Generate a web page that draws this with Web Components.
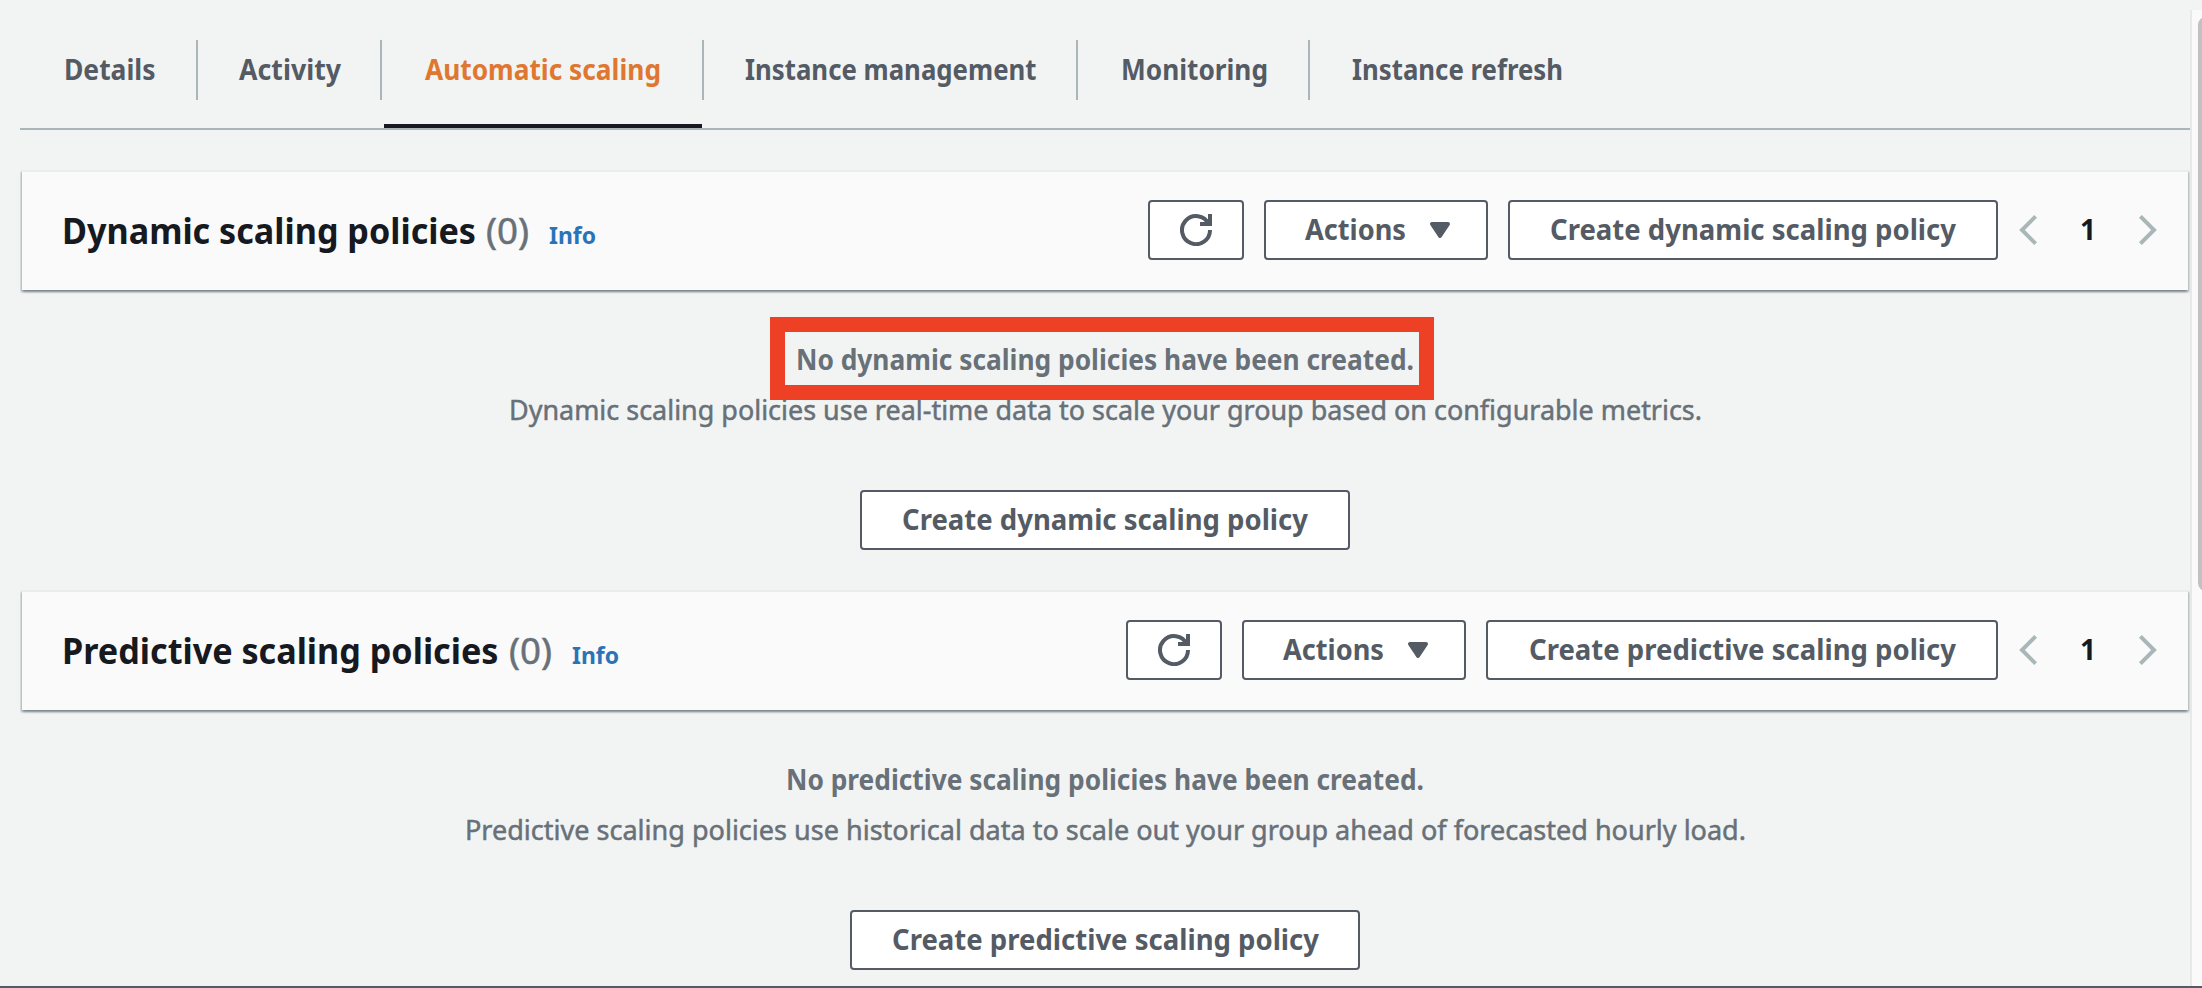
<!DOCTYPE html>
<html lang="en">
<head>
<meta charset="utf-8">
<title>Automatic scaling</title>
<style>
html, body { margin: 0; height: 100%; }
body { background: #f2f4f4; font-family: "Noto Sans", "Open Sans", sans-serif; font-size: 28px; color: #545b64; overflow: hidden; }
</style>
</head>
<body>
<scaling-page></scaling-page>
<script>
const define = (name, html, setup) => customElements.define(name, class extends HTMLElement {
  connectedCallback() {
    if (this.shadowRoot) return;
    const root = this.attachShadow({ mode: 'open' });
    root.innerHTML = typeof html === 'function' ? html(this) : html;
    if (setup) setup(this, root);
  }
});

/* One line of text, condensed or widened to a given advance width. */
define('fit-text', el => `<style>
  :host { display: block; flex: none; width: ${el.getAttribute('w')}px; white-space: nowrap; }
  span { display: inline-block; transform-origin: 0 50%; }
</style><span><slot></slot></span>`, (el, root) => {
  const span = root.querySelector('span');
  span.style.transform = `translateY(-1px) scaleX(${el.getAttribute('w') / span.getBoundingClientRect().width})`;
});

define('ui-icon', el => `<style>
  :host { display: block; flex: none; width: 32px; height: 32px; }
  svg { display: block; fill: none; stroke: currentColor; stroke-width: 2; }
</style><svg width="32" height="32" viewBox="0 0 16 16">${{
  refresh: '<path d="M10 5h5V0"/><path d="M15 8a7 7 0 1 1-.7-3"/>',
  caret: '<path d="M4 5h8l-4 6z" fill="currentColor" stroke-linejoin="round"/>',
  left: '<path d="M11.8 1.2 5 8l6.8 6.8"/>',
  right: '<path d="M4.2 1.2 11 8l-6.8 6.8"/>'
}[el.getAttribute('name')]}</svg>`);

define('ui-button', el => `<style>
  :host { display: flex; flex: none; box-sizing: border-box; width: ${el.getAttribute('w')}px; height: 60px;
    align-items: center; justify-content: center; gap: 18px; border: 2px solid #545b64; border-radius: 4px;
    background: #fff; color: #545b64; font-weight: 700; line-height: 56px; }
  :host([menu]) { padding-left: 9px; }
</style><slot></slot>`);

define('ui-tab', el => `<style>
  :host { display: block; box-sizing: border-box; height: 90px; }
  .label { box-sizing: border-box; height: 60px; line-height: 60px; padding-left: ${el.getAttribute('pad')}px;
    border-right: 2px solid #aab7b8; font-weight: 700; }
  :host([last]) .label { border: 0; }
  :host([active]) .label { color: #e07730; }
  :host([active]) .bar { height: 4px; margin: 24px 2px 0; background: #16191f; }
</style><div class="label"><slot></slot></div><div class="bar"></div>`);

define('ui-tabs', `<style>
  :host { display: grid; grid-template-columns: 178px 184px 322px 374px 232px 1fr; box-sizing: border-box;
    height: 130px; margin-left: 20px; padding-top: 40px; border-bottom: 2px solid #aab7b8; }
</style>
<ui-tab pad="44"><fit-text w="91.5">Details</fit-text></ui-tab>
<ui-tab pad="40.5"><fit-text w="102">Activity</fit-text></ui-tab>
<ui-tab pad="42.5" active><fit-text w="236">Automatic scaling</fit-text></ui-tab>
<ui-tab pad="41"><fit-text w="291.5">Instance management</fit-text></ui-tab>
<ui-tab pad="42.5"><fit-text w="147">Monitoring</fit-text></ui-tab>
<ui-tab pad="42" last><fit-text w="211">Instance refresh</fit-text></ui-tab>`);

define('panel-header', `<style>
  :host { display: flex; box-sizing: border-box; height: 120px; margin: 0 2px; padding: 0 24px 2px 40px; align-items: center;
    border-top: 2px solid #eaeded; background: #fafafa;
    box-shadow: 0 2px 2px rgba(0,28,36,.3), 2px 2px 2px rgba(0,28,36,.15), -2px 2px 2px rgba(0,28,36,.15);
    clip-path: inset(0 -2px -6px -2px); }
  .title { display: flex; align-items: baseline; flex: 1; padding-top: 8px; font-size: 36px; line-height: 50px; color: #16191f; font-weight: 700; }
  .tools { display: flex; gap: 20px; }
  .pages { display: flex; align-items: center; margin-left: 14px; color: #aab7b8; }
  .num { width: 88px; text-align: center; color: #16191f; font-weight: 700; line-height: 58px; padding-bottom: 2px; }
</style>
<div class="title"><slot name="title"></slot></div>
<div class="tools"><slot name="tools"></slot></div>
<div class="pages"><ui-icon name="left"></ui-icon><div class="num">1</div><ui-icon name="right"></ui-icon></div>`);

define('empty-state', `<style>
  :host { display: flex; flex-direction: column; align-items: center; height: 300px; box-sizing: border-box; padding-top: 45px; color: #687078; }
  .head { position: relative; font-weight: 700; line-height: 50px; }
  .body { line-height: 50px; margin-bottom: 55px; -webkit-text-stroke: .5px currentColor; }
  .mark { display: none; }
  :host([marked]) .mark { display: block; position: absolute; z-index: 1; left: -26px; right: -20px; top: -18px; height: 53px; border: 15px solid #ed4024; }
</style>
<div class="head"><slot name="head"></slot><div class="mark"></div></div>
<div class="body"><slot name="body"></slot></div>
<slot></slot>`);

define('side-scroll', `<style>
  :host { display: block; box-sizing: border-box; margin-top: 10px; border-left: 2px solid #e8e8e8; background: #fafafa; padding: 7px 0 0 6px; overflow: hidden; }
  div { width: 16px; height: 574px; border-radius: 8px; background: #c1c1c1; }
</style><div></div>`);

define('scaling-page', `<style>
  :host { display: grid; grid-template-columns: 2190px 12px; grid-template-rows: 986px 2px; height: 988px; }
  main { min-width: 0; }
  .panels { margin: 40px 0 0 20px; }
  .count { font-weight: 400; color: #687078; margin-left: 10px; -webkit-text-stroke: .5px currentColor; }
  .info { font-size: 24px; color: #2a73b8; margin-left: 20px; }
  footer { grid-column: 1 / 3; background: #545b64; }
</style>
<main>
  <ui-tabs></ui-tabs>
  <div class="panels">
    <panel-header>
      <fit-text slot="title" w="414">Dynamic scaling policies</fit-text>
      <fit-text slot="title" class="count" w="43">(0)</fit-text>
      <fit-text slot="title" class="info" w="47">Info</fit-text>
      <ui-button slot="tools" w="96"><ui-icon name="refresh"></ui-icon></ui-button>
      <ui-button slot="tools" w="224" menu><fit-text w="101">Actions</fit-text><ui-icon name="caret"></ui-icon></ui-button>
      <ui-button slot="tools" w="490"><fit-text w="406">Create dynamic scaling policy</fit-text></ui-button>
    </panel-header>
    <empty-state marked>
      <fit-text slot="head" w="618">No dynamic scaling policies have been created.</fit-text>
      <fit-text slot="body" w="1193">Dynamic scaling policies use real-time data to scale your group based on configurable metrics.</fit-text>
      <ui-button w="490"><fit-text w="406">Create dynamic scaling policy</fit-text></ui-button>
    </empty-state>
    <panel-header>
      <fit-text slot="title" w="436.5">Predictive scaling policies</fit-text>
      <fit-text slot="title" class="count" w="43">(0)</fit-text>
      <fit-text slot="title" class="info" w="47">Info</fit-text>
      <ui-button slot="tools" w="96"><ui-icon name="refresh"></ui-icon></ui-button>
      <ui-button slot="tools" w="224" menu><fit-text w="101">Actions</fit-text><ui-icon name="caret"></ui-icon></ui-button>
      <ui-button slot="tools" w="512"><fit-text w="427">Create predictive scaling policy</fit-text></ui-button>
    </panel-header>
    <empty-state>
      <fit-text slot="head" w="638">No predictive scaling policies have been created.</fit-text>
      <fit-text slot="body" w="1281">Predictive scaling policies use historical data to scale out your group ahead of forecasted hourly load.</fit-text>
      <ui-button w="510"><fit-text w="427">Create predictive scaling policy</fit-text></ui-button>
    </empty-state>
  </div>
</main>
<side-scroll></side-scroll>
<footer></footer>`);
</script>
</body>
</html>
